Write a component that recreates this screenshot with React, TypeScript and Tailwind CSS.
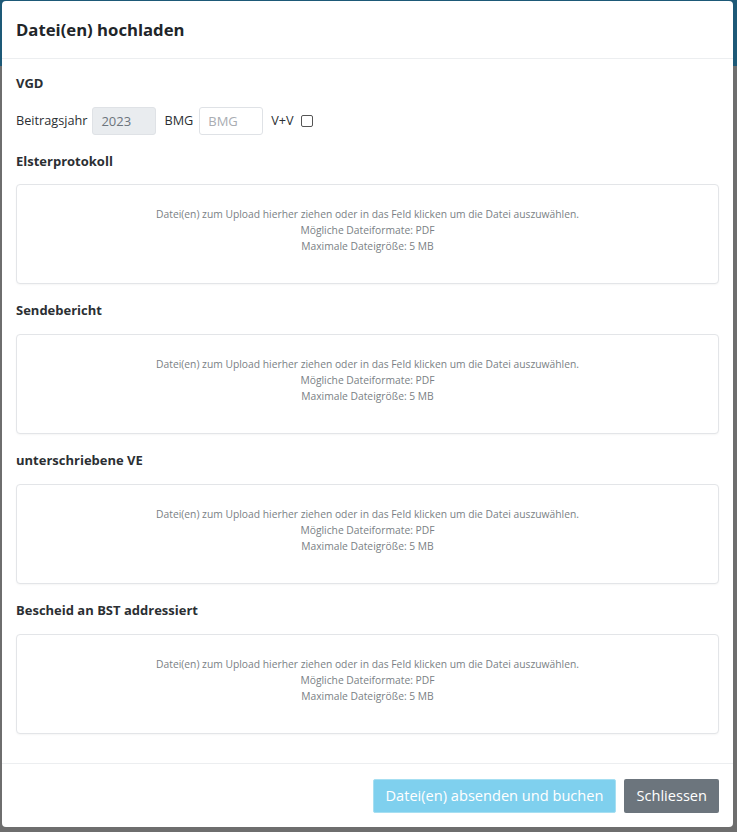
import { useState } from "react"

const sections = [
    "Elsterprotokoll",
    "Sendebericht",
    "unterschriebene VE",
    "Bescheid an BST addressiert",
]

function DropZone() {
    return (
        <div className="h-[100px] rounded-[4px] border border-[#e3e5e8] bg-white pt-[21px] text-center text-[10.3px] leading-4 text-[#7a7f85] shadow-[0_1px_2px_rgba(0,0,0,0.04)] cursor-pointer">
            <div>Datei(en) zum Upload hierher ziehen oder in das Feld klicken um die Datei auszuwählen.</div>
            <div>Mögliche Dateiformate: PDF</div>
            <div>Maximale Dateigröße: 5 MB</div>
        </div>
    )
}

export default function App() {
    const [vv, setVv] = useState(false)

    return (
        <div className="relative h-[832px] w-[737px] overflow-hidden bg-[#6e6e6e] font-['Open_Sans',sans-serif] text-[#2b2f33]">
            <div className="h-[66px] bg-[#1d5977]" />

            <div className="absolute left-[2px] top-[1px] flex h-[826px] w-[731px] flex-col rounded-[4px] bg-white">
                <div className="flex h-[58px] items-center border-b border-[#eceef0] px-[14px]">
                    <h1 className="text-[16.7px] font-bold text-[#212529]">Datei(en) hochladen</h1>
                </div>

                <div className="flex-1 px-[14px] pt-[14px]">
                    <div className="h-5 text-[13px] font-bold leading-5">VGD</div>

                    <div className="mt-[14px] flex h-7 items-center text-[12.7px]">
                        <label htmlFor="jahr">Beitragsjahr</label>
                        <input
                            id="jahr"
                            type="text"
                            defaultValue="2023"
                            disabled
                            className="ml-[5px] h-7 w-16 rounded-[3px] border border-[#dfe2e6] bg-[#e9ecef] px-2 text-[13px] text-[#6c757d]"
                        />
                        <label htmlFor="bmg" className="ml-2">BMG</label>
                        <input
                            id="bmg"
                            type="text"
                            placeholder="BMG"
                            className="ml-[6px] h-7 w-16 rounded-[3px] border border-[#dfe2e6] bg-white px-2 text-[13px] placeholder:text-[#a9adb2]"
                        />
                        <label htmlFor="vv" className="ml-2">V+V</label>
                        <input
                            id="vv"
                            type="checkbox"
                            checked={vv}
                            onChange={e => setVv(e.target.checked)}
                            className="ml-[7px] h-3 w-3 appearance-none rounded-[2px] border border-[#555] bg-white"
                        />
                    </div>

                    {sections.map((title, i) => (
                        <div key={title} className="mt-4">
                            <div className="h-5 text-[13px] font-bold leading-5">{title}</div>
                            <div className={i === 0 ? "mt-[13px]" : "mt-[14px]"}>
                                <DropZone />
                            </div>
                        </div>
                    ))}
                </div>

                <div className="flex h-[64px] items-center justify-end gap-2 border-t border-[#eceef0] px-[14px]">
                    <button
                        type="button"
                        disabled
                        className="h-[34px] rounded-[2px] border border-[#a6dff2] bg-[#7fd0ee] px-3 text-[14.6px] text-white"
                    >
                        Datei(en) absenden und buchen
                    </button>
                    <button
                        type="button"
                        className="h-[34px] rounded-[2px] bg-[#6c757d] px-3 text-[14.6px] text-white"
                    >
                        Schliessen
                    </button>
                </div>
            </div>
        </div>
    )
}
